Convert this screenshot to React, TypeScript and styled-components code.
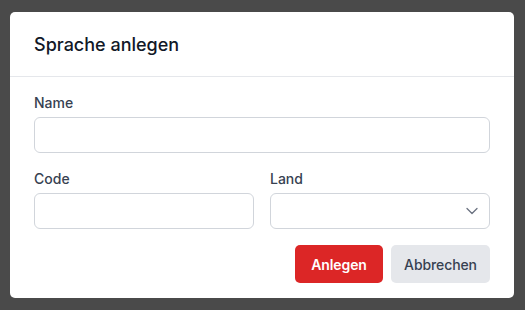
import styled, { createGlobalStyle } from 'styled-components';

const GlobalStyle = createGlobalStyle`
  html, body {
    margin: 0;
    padding: 0;
    background: #4a4a4a;
    font-family: Inter, "Liberation Sans", sans-serif;
  }
  * {
    box-sizing: border-box;
  }
`;

// 배경 (흐린 페이지)
const Backdrop = styled.div`
  width: 525px;
  height: 310px;
  background: #4a4a4a;
  padding: 12px 11px 12px 10px;
`;

const Modal = styled.div`
  background: #ffffff;
  border-radius: 5px;
  height: 286px;
  display: flex;
  flex-direction: column;
  overflow: hidden;
`;

const Header = styled.div`
  height: 65px;
  display: flex;
  align-items: center;
  padding: 0 24px;
  border-bottom: 1px solid #e5e7eb;

  h2 {
    margin: 0;
    font-size: 18px;
    font-weight: 500;
    color: #111827;
    padding-top: 1px;
  }
`;

const Body = styled.div`
  padding: 16px 24px 15px;
  display: flex;
  flex-direction: column;
  gap: 16px;
`;

const Row = styled.div`
  display: grid;
  grid-template-columns: 1fr 1fr;
  gap: 16px;
`;

const Field = styled.label`
  display: flex;
  flex-direction: column;
  gap: 4px;

  span {
    font-size: 14px;
    line-height: 20px;
    font-weight: 500;
    color: #374151;
  }
`;

const Input = styled.input`
  height: 36px;
  width: 100%;
  border: 1px solid #d1d5db;
  border-radius: 6px;
  background: #ffffff;
  padding: 0 12px;
  font: inherit;
  font-size: 14px;
  outline: none;
`;

const SelectBox = styled.div`
  position: relative;
  height: 36px;
  border: 1px solid #d1d5db;
  border-radius: 6px;
  background: #ffffff;

  select {
    appearance: none;
    width: 100%;
    height: 100%;
    border: none;
    background: transparent;
    outline: none;
    font: inherit;
  }

  svg {
    position: absolute;
    right: 10px;
    top: 12px;
    pointer-events: none;
  }
`;

const Footer = styled.div`
  display: flex;
  justify-content: flex-end;
  gap: 8px;
`;

const Button = styled.button<{ $variant: 'primary' | 'secondary'; $width: number }>`
  height: 38px;
  width: ${({ $width }) => $width}px;
  padding: 0;
  border: none;
  border-radius: 5px;
  font-family: inherit;
  font-size: 14px;
  letter-spacing: -0.1px;
  font-weight: ${({ $variant }) => ($variant === 'primary' ? 600 : 500)};
  background: ${({ $variant }) => ($variant === 'primary' ? '#dc2626' : '#e5e7eb')};
  color: ${({ $variant }) => ($variant === 'primary' ? '#ffffff' : '#374151')};
  cursor: pointer;
`;

export default function App() {
  return (
    <>
      <GlobalStyle />
      <Backdrop>
        <Modal>
          <Header>
            <h2>Sprache anlegen</h2>
          </Header>
          <Body>
            <Field>
              <span>Name</span>
              <Input type="text" />
            </Field>
            <Row>
              <Field>
                <span>Code</span>
                <Input type="text" />
              </Field>
              <Field>
                <span>Land</span>
                <SelectBox>
                  <select defaultValue="">
                    <option value=""></option>
                  </select>
                  <svg width="14" height="10" viewBox="0 0 14 10" fill="none">
                    <path d="M2 2.5 L7 7.5 L12 2.5" stroke="#6b7280" strokeWidth="1.3" strokeLinecap="round" strokeLinejoin="round" />
                  </svg>
                </SelectBox>
              </Field>
            </Row>
            <Footer>
              <Button $variant="primary" $width={88}>Anlegen</Button>
              <Button $variant="secondary" $width={99}>Abbrechen</Button>
            </Footer>
          </Body>
        </Modal>
      </Backdrop>
    </>
  );
}
